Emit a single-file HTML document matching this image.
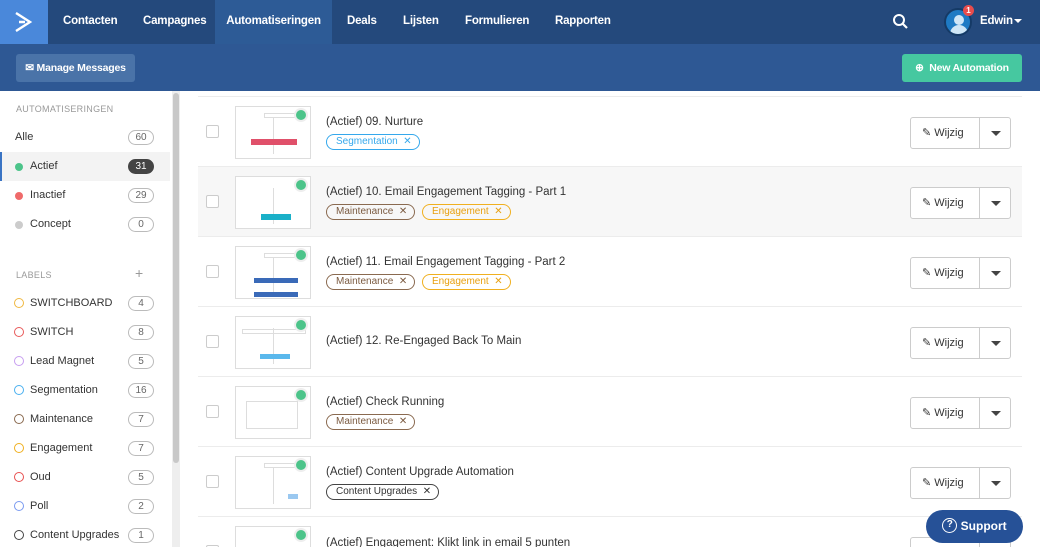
<!DOCTYPE html>
<html><head><meta charset="utf-8"><style>
*{box-sizing:border-box;margin:0;padding:0}
html,body{width:1040px;height:547px;overflow:hidden}
body{font-family:"Liberation Sans",sans-serif;background:#fff;position:relative;color:#333}
.nav{position:absolute;left:0;top:0;width:1040px;height:44px;background:#24497c}
.logo{position:absolute;left:0;top:0;width:48px;height:44px;background:#4a88da}
.nav .t{position:absolute;top:0;height:44px;line-height:42px;color:#fff;font-size:11.5px;font-weight:bold;letter-spacing:-0.2px}
.act{background:#2d5b96}
.sub{position:absolute;left:0;top:44px;width:1040px;height:47px;background:#2e5894}
.mm{position:absolute;left:16px;top:10px;width:119px;height:28px;background:#4a73a8;border-radius:3px;color:#fff;font-size:10.5px;font-weight:bold;line-height:28px;text-align:center;letter-spacing:-0.2px}
.na{position:absolute;left:902px;top:10px;width:120px;height:28px;background:#46c8a0;border-radius:3px;color:#fff;font-size:10.5px;font-weight:bold;line-height:28px;text-align:center;letter-spacing:-0.2px}
.side{position:absolute;left:0;top:91px;width:170px;height:456px;overflow:hidden}
.h{position:absolute;left:16px;font-size:9px;color:#999;letter-spacing:.3px}
.it{position:absolute;left:0;width:170px;height:29px;font-size:11px;line-height:29px;color:#333}
.it .l{position:absolute;left:30px}
.it .d{position:absolute;left:15px;top:11px;width:8px;height:8px;border-radius:50%}
.it .o{position:absolute;left:14px;top:9px;width:10px;height:10px;border-radius:50%;border:1.5px solid}
.it .c{position:absolute;left:128px;top:7px;width:26px;height:15px;border:1px solid #bbb;border-radius:8px;text-align:center;font-size:10px;line-height:13px;color:#666}
.sb{position:absolute;left:172px;top:91px;width:8px;height:456px;background:#eee}
.sb i{position:absolute;left:1px;top:2px;width:6px;height:370px;background:#c8c8c8;border-radius:3px}
.row{position:absolute;left:198px;width:824px;height:70px;border-top:1px solid #ececec;overflow:hidden}
.cb{position:absolute;left:8px;top:28px;width:13px;height:13px;border:1px solid #ccc;border-radius:2px;background:#fff}
.th{position:absolute;left:37px;top:9px;width:76px;height:53px;border:1px solid #ddd;background:#fff;overflow:hidden}
.th .g{position:absolute;right:4px;top:3px;width:10px;height:10px;border-radius:50%;background:#4cc48a;box-shadow:0 0 0 2px #eee}
.th .b{position:absolute;left:28px;top:6px;width:34px;height:5px;border:1px solid #ddd}
.th .ln{position:absolute;left:37px;top:11px;width:1px;height:36px;background:#ddd}
.ti{position:absolute;left:128px;top:19px;font-size:11.5px;color:#333}
.tg{position:absolute;top:37px;height:16px;border:1px solid;border-radius:8px;font-size:10px;line-height:14px;padding:0 7px 0 9px}
.w{position:absolute;left:712px;top:20px;width:101px;height:32px;border:1px solid #ccc;border-radius:3px;background:#fff}
.w .a{position:absolute;left:11px;top:0;line-height:30px;font-size:11px;color:#333}
.w .s{position:absolute;left:68px;top:0;width:1px;height:30px;background:#ccc}
.w .v{position:absolute;left:80px;top:13px;border-left:5px solid transparent;border-right:5px solid transparent;border-top:5px solid #444}
</style></head><body>
<div class="nav">
<div class="logo"><svg width="48" height="44"><path d="M16 13 L30 22 L16 31 M19 22 L25 22" stroke="#fff" stroke-width="2.4" fill="none"/></svg></div>
<div class="t" style="left:63px">Contacten</div>
<div class="t" style="left:143px">Campagnes</div>
<div class="t act" style="left:215px;width:117px;text-align:center">Automatiseringen</div>
<div class="t" style="left:347px">Deals</div>
<div class="t" style="left:403px">Lijsten</div>
<div class="t" style="left:465px">Formulieren</div>
<div class="t" style="left:555px">Rapporten</div>
<svg style="position:absolute;left:892px;top:13px" width="18" height="18"><circle cx="7" cy="7" r="5" stroke="#fff" stroke-width="2" fill="none"/><path d="M11 11 L15 15" stroke="#fff" stroke-width="2.2"/></svg>
<div style="position:absolute;left:944px;top:8px;width:28px;height:28px;border-radius:50%;background:#1e7ac4;border:2px solid #153a66;overflow:hidden"><div style="position:absolute;left:8px;top:5px;width:10px;height:10px;border-radius:50%;background:#cfe6f7"></div><div style="position:absolute;left:4px;top:15px;width:18px;height:14px;border-radius:9px 9px 0 0;background:#cfe6f7"></div></div>
<div style="position:absolute;left:963px;top:5px;width:11px;height:11px;border-radius:50%;background:#e84c4c;color:#fff;font-size:8px;text-align:center;line-height:11px;font-weight:bold">1</div>
<div class="t" style="left:980px">Edwin</div>
<div style="position:absolute;left:1014px;top:19px;border-left:4px solid transparent;border-right:4px solid transparent;border-top:4px solid #fff"></div>
</div>
<div class="sub"><div class="mm">✉ Manage Messages</div><div class="na">⊕&nbsp; New Automation</div></div>
<div class="side">
<div class="h" style="top:13px">AUTOMATISERINGEN</div>
<div class="it" style="top:32px"><span class="l" style="left:15px">Alle</span><span class="c">60</span></div>
<div class="it" style="top:61px;background:#f3f3f3;border-left:2px solid #3a74c4"><span class="d" style="background:#4cc48a;left:13px"></span><span class="l" style="left:28px">Actief</span><span class="c" style="background:#444;color:#fff;border-color:#444;left:126px">31</span></div>
<div class="it" style="top:90px"><span class="d" style="background:#ef6a6a"></span><span class="l">Inactief</span><span class="c">29</span></div>
<div class="it" style="top:119px"><span class="d" style="background:#ccc"></span><span class="l">Concept</span><span class="c">0</span></div>
<div class="h" style="top:179px">LABELS</div><div style="position:absolute;left:135px;top:174px;color:#999;font-size:14px">+</div>
<div class="it" style="top:198px"><span class="o" style="border-color:#f0b840"></span><span class="l">SWITCHBOARD</span><span class="c">4</span></div>
<div class="it" style="top:227px"><span class="o" style="border-color:#e85a5a"></span><span class="l">SWITCH</span><span class="c">8</span></div>
<div class="it" style="top:256px"><span class="o" style="border-color:#c79ef0"></span><span class="l">Lead Magnet</span><span class="c">5</span></div>
<div class="it" style="top:285px"><span class="o" style="border-color:#4ab0f0"></span><span class="l">Segmentation</span><span class="c">16</span></div>
<div class="it" style="top:314px"><span class="o" style="border-color:#8a6a50"></span><span class="l">Maintenance</span><span class="c">7</span></div>
<div class="it" style="top:343px"><span class="o" style="border-color:#f0b020"></span><span class="l">Engagement</span><span class="c">7</span></div>
<div class="it" style="top:372px"><span class="o" style="border-color:#e85050"></span><span class="l">Oud</span><span class="c">5</span></div>
<div class="it" style="top:401px"><span class="o" style="border-color:#7a9af0"></span><span class="l">Poll</span><span class="c">2</span></div>
<div class="it" style="top:430px;height:26px"><span class="o" style="border-color:#444"></span><span class="l">Content Upgrades</span><span class="c">1</span></div>
</div>
<div class="sb"><i></i></div>

<div class="row" style="top:96px"><div class="cb"></div><div class="th"><div class="ln"></div><div class="b"></div><div class="g"></div><div style="position:absolute;left:15px;top:32px;width:46px;height:6px;background:#e0506a"></div></div><div class="ti">(Actief) 09. Nurture</div><span class="tg" style="left:128px;color:#35a8ec;border-color:#35a8ec">Segmentation &nbsp;✕</span><div class="w"><span class="a">✎ Wijzig</span><span class="s"></span><span class="v"></span></div></div>
<div class="row" style="top:166px;background:#f7f7f7"><div class="cb"></div><div class="th"><div class="ln"></div><div class="g"></div><div style="position:absolute;left:25px;top:37px;width:30px;height:6px;background:#1ab0c8"></div></div><div class="ti">(Actief) 10. Email Engagement Tagging - Part 1</div><span class="tg" style="left:128px;color:#7a5a40;border-color:#8a6a50">Maintenance &nbsp;✕</span><span class="tg" style="left:224px;color:#e8a010;border-color:#f0b020">Engagement &nbsp;✕</span><div class="w"><span class="a">✎ Wijzig</span><span class="s"></span><span class="v"></span></div></div>
<div class="row" style="top:236px"><div class="cb"></div><div class="th"><div class="ln"></div><div class="b"></div><div class="g"></div><div style="position:absolute;left:18px;top:31px;width:44px;height:5px;background:#3a6ab8"></div><div style="position:absolute;left:18px;top:45px;width:44px;height:5px;background:#3a6ab8"></div></div><div class="ti">(Actief) 11. Email Engagement Tagging - Part 2</div><span class="tg" style="left:128px;color:#7a5a40;border-color:#8a6a50">Maintenance &nbsp;✕</span><span class="tg" style="left:224px;color:#e8a010;border-color:#f0b020">Engagement &nbsp;✕</span><div class="w"><span class="a">✎ Wijzig</span><span class="s"></span><span class="v"></span></div></div>
<div class="row" style="top:306px"><div class="cb"></div><div class="th"><div class="ln"></div><div class="b" style="left:6px;top:12px;width:64px"></div><div class="g"></div><div style="position:absolute;left:24px;top:37px;width:30px;height:5px;background:#5ab8ec"></div></div><div class="ti" style="top:28px">(Actief) 12. Re-Engaged Back To Main</div><div class="w"><span class="a">✎ Wijzig</span><span class="s"></span><span class="v"></span></div></div>
<div class="row" style="top:376px"><div class="cb"></div><div class="th"><div class="g"></div><div class="b" style="left:10px;top:14px;width:52px;height:28px"></div></div><div class="ti">(Actief) Check Running</div><span class="tg" style="left:128px;color:#7a5a40;border-color:#8a6a50">Maintenance &nbsp;✕</span><div class="w"><span class="a">✎ Wijzig</span><span class="s"></span><span class="v"></span></div></div>
<div class="row" style="top:446px"><div class="cb"></div><div class="th"><div class="ln"></div><div class="b"></div><div class="g"></div><div style="position:absolute;left:52px;top:37px;width:10px;height:5px;background:#9ac8f0"></div></div><div class="ti">(Actief) Content Upgrade Automation</div><span class="tg" style="left:128px;color:#333;border-color:#444">Content Upgrades &nbsp;✕</span><div class="w"><span class="a">✎ Wijzig</span><span class="s"></span><span class="v"></span></div></div>
<div class="row" style="top:516px;height:31px"><div class="cb"></div><div class="th"><div class="g"></div></div><div class="ti" style="top:20px">(Actief) Engagement: Klikt link in email 5 punten</div><div class="w"><span class="a">✎ Wijzig</span><span class="s"></span><span class="v"></span></div></div>
<div style="position:absolute;left:926px;top:510px;width:97px;height:33px;border-radius:17px;background:#265197;color:#fff;font-weight:bold;font-size:12px;line-height:33px;text-align:center"><span style="display:inline-block;width:15px;height:15px;border:1.5px solid #fff;border-radius:50%;line-height:12px;font-size:10px;vertical-align:middle;margin-top:-3px">?</span> Support</div>
</body></html>
